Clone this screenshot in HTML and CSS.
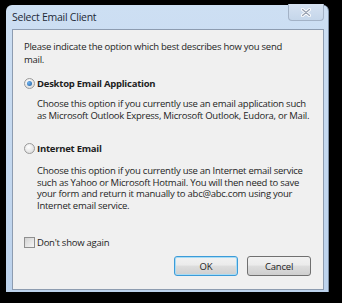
FILE: index.html
```html
<!DOCTYPE html>
<html lang="en">
<head>
    <meta charset="UTF-8">
    <title>Select Email Client</title>
    <link rel="stylesheet" href="styles.css">
</head>
<body>
    <div class="window">
        <div class="titlebar">
            <span class="title">Select Email Client</span>
            <span class="close-btn">
                <svg width="10" height="9" viewBox="0 0 10 9">
                    <path d="M1.5 1.5 L8.5 7.5 M8.5 1.5 L1.5 7.5" stroke="#ffffff" stroke-width="3" stroke-linecap="round"/>
                    <path d="M1.5 1.5 L8.5 7.5 M8.5 1.5 L1.5 7.5" stroke="#9aa3b3" stroke-width="1.3" stroke-linecap="round"/>
                </svg>
            </span>
        </div>
        <div class="content">
            <p class="intro">Please indicate the option which best describes how you send mail.</p>

            <label class="option option-first">
                <span class="radio checked"></span>
                <span class="option-label">Desktop Email Application</span>
            </label>
            <p class="desc desc-first">Choose this option if you currently use an email application such as Microsoft Outlook Express, Microsoft Outlook, Eudora, or Mail.</p>

            <label class="option">
                <span class="radio"></span>
                <span class="option-label">Internet Email</span>
            </label>
            <p class="desc desc-second">Choose this option if you currently use an Internet email service such as Yahoo or Microsoft Hotmail. You will then need to save your form and return it manually to abc@abc.com using your Internet email service.</p>

            <label class="check-row">
                <span class="checkbox"></span>
                <span>Don't show again</span>
            </label>

            <div class="buttons">
                <button class="btn btn-default">OK</button>
                <button class="btn">Cancel</button>
            </div>
        </div>
    </div>
</body>
</html>
```

FILE: styles.css
```css
body {
    margin: 0;
    padding: 0;
    background: #000;
    font-family: "Open Sans", "Noto Sans", sans-serif;
    font-size: 9.5px;
    letter-spacing: -0.25px;
    color: #1e1e1e;
}

.window {
    margin: 5px 0 0 6px;
    width: 323px;
    height: 287px;
    box-sizing: border-box;
    padding: 0 4px 2px 6px;
    background: linear-gradient(to bottom, #cddff3, #bcd2ec);
    border-right: 1px solid #7d8ea3;
    border-radius: 6px 6px 0 0;
    display: flex;
    flex-direction: column;
}

.titlebar {
    height: 24px;
    flex-shrink: 0;
    display: flex;
    justify-content: space-between;
    align-items: flex-start;
}

.title {
    margin-top: 5px;
    font-size: 10.5px;
    color: #1e2a38;
}

.close-btn {
    width: 36px;
    height: 17px;
    margin-top: -1px;
    box-sizing: border-box;
    border: 1px solid #a3b2c6;
    border-top: none;
    border-radius: 0 0 4px 4px;
    background: linear-gradient(to bottom, #d6e2f1, #c5d6ea);
    display: flex;
    justify-content: center;
    align-items: center;
}

.content {
    flex: 1;
    overflow: hidden;
    background: #f0f0f0;
    border: 1px solid #8d9cb0;
    padding: 10px 0 0 11px;
    display: flex;
    flex-direction: column;
}

.intro {
    margin: 0;
    line-height: 13px;
    padding-right: 22px;
}

.option {
    display: flex;
    align-items: center;
    gap: 2px;
    line-height: 13px;
}

.option-first {
    margin-top: 11px;
}

.option + .desc {
    margin-top: 8px;
}

.desc-first + .option {
    margin-top: 20px;
}

.option-label {
    font-weight: bold;
}

.radio {
    width: 11px;
    height: 11px;
    box-sizing: border-box;
    border-radius: 50%;
    border: 1px solid #9a9a9a;
    background: radial-gradient(circle at 40% 35%, #ffffff, #d4d4d4);
    display: flex;
    justify-content: center;
    align-items: center;
}

.radio.checked::after {
    content: "";
    width: 5px;
    height: 5px;
    border-radius: 50%;
    background: radial-gradient(circle at 35% 35%, #6fb3f0, #1c5a9c);
}

.desc {
    margin: 0 0 0 13px;
    line-height: 12px;
    padding-right: 6px;
}

.option + .desc-second {
    margin-top: 10px;
    line-height: 11.5px;
}

.check-row {
    display: flex;
    align-items: center;
    gap: 2px;
    line-height: 13px;
    margin-top: 25px;
}

.checkbox {
    width: 11px;
    height: 11px;
    box-sizing: border-box;
    border: 1px solid #8f8f8f;
    background: linear-gradient(135deg, #d2d2d2, #f6f6f6);
}

.buttons {
    display: flex;
    justify-content: flex-end;
    gap: 9px;
    margin-top: 7px;
    padding-right: 12px;
}

.btn {
    width: 64px;
    height: 20px;
    padding: 0;
    font-family: inherit;
    font-size: 9.5px;
    letter-spacing: -0.2px;
    color: #1e1e1e;
    border: 1px solid #707070;
    border-radius: 3px;
    background: linear-gradient(to bottom, #f2f2f2 0%, #ebebeb 45%, #dddddd 50%, #cfcfcf 100%);
}

.btn-default {
    border-color: #3c9bd8;
    box-shadow: inset 0 0 0 1px #a8dcf5;
}
```
